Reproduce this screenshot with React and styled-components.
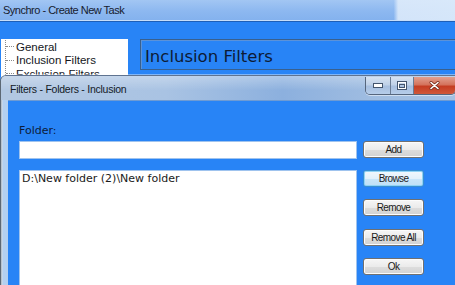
import React from "react";
import styled, { createGlobalStyle } from "styled-components";

const Global = createGlobalStyle`
  html, body { margin: 0; padding: 0; background: #2884f6; }
  #root { width: 455px; height: 285px; }
`;

const Desktop = styled.div`
  position: relative;
  width: 455px;
  height: 285px;
  overflow: hidden;
  background: #2884f6;
`;

const MainWindow = styled.div`
  display: flex;
  flex-direction: column;
  width: 100%;
  height: 100%;
`;

const MainTitleBar = styled.div`
  height: 20px;
  display: flex;
  align-items: center;
  padding-left: 3px;
  background:
    linear-gradient(90deg, rgba(255,255,255,0) 0%, rgba(255,255,255,0) 86.5%, rgba(225,237,251,0.85) 87.5%, rgba(222,236,251,0.9) 100%),
    linear-gradient(180deg, #a2c6f3 0%, #8db8f0 55%, #84b2ee 100%);
  border-bottom: 1px solid #c6def9;
  box-shadow: 0 1px 0 #1d5fb8;
  font-family: "Liberation Sans", Arial, sans-serif;
  font-size: 11px;
  letter-spacing: -0.5px;
  color: #17202e;
`;

const MainBody = styled.div`
  flex: 1;
  display: flex;
  align-items: flex-start;
  gap: 12px;
  padding-top: 18px;
  padding-left: 1px;
`;

const TreePanel = styled.div`
  width: 127px;
  height: 60px;
  background: #ffffff;
  padding-top: 1px;
  font-family: "Liberation Sans", Arial, sans-serif;
  font-size: 11.5px;
  color: #14161b;
`;

const TreeItems = styled.div`
  border-left: 1px dotted #8a8a8a;
  margin-left: 4px;
`;

const TreeItem = styled.div`
  display: flex;
  align-items: center;
  height: 13.5px;
  &::before {
    content: "";
    width: 8px;
    margin-right: 2px;
    border-top: 1px dotted #8a8a8a;
  }
`;

const HeaderPanel = styled.div`
  flex: 1;
  height: 31px;
  border: 1px solid #38608f;
  border-right: none;
  box-shadow: inset 1px 1px 0 #5b92d8;
  display: flex;
  align-items: center;
  padding: 3px 0 0 4px;
  box-sizing: border-box;
  font-family: "DejaVu Sans", Verdana, sans-serif;
  font-size: 16.5px;
  color: #0d1b35;
`;

const Dialog = styled.div`
  position: absolute;
  left: 0;
  top: 75px;
  width: 470px;
  height: 225px;
  display: flex;
  flex-direction: column;
  border-left: 1px solid #5d6874;
  border-top: 1px solid #5f7390;
  border-top-left-radius: 6px;
  background: linear-gradient(90deg, #9aa7b5 0px, #d3dce6 1px, #b4d0f0 2px, #b4d0f0 100%);
  box-shadow: 0 -1px 0 rgba(255,255,255,0.4);
`;

const DialogTitleBar = styled.div`
  height: 24px;
  display: flex;
  align-items: flex-start;
  background:
    linear-gradient(180deg, rgba(255,255,255,0.3) 0%, rgba(255,255,255,0) 60%),
    linear-gradient(90deg, #b3c8e2 0%, #a9c3e3 35%, #8cb0de 60%, #a0bde1 80%, #a5c1e3 100%);
  border-top-left-radius: 5px;
`;

const DialogTitle = styled.div`
  padding-left: 9px;
  padding-top: 7px;
  font-family: "Liberation Sans", Arial, sans-serif;
  font-size: 10.5px;
  letter-spacing: -0.25px;
  color: #131a26;
`;

const CaptionButtons = styled.div`
  margin-left: auto;
  margin-right: 15px;
  display: flex;
  height: 17px;
  margin-top: 1px;
  border: 1px solid #56667d;
  border-top: none;
  border-radius: 0 0 5px 5px;
  overflow: hidden;
  box-shadow: 0 1px 0 rgba(255,255,255,0.5);
`;

const CaptionButton = styled.div`
  width: ${p => p.$w}px;
  display: flex;
  align-items: center;
  justify-content: center;
  border-left: ${p => (p.$first ? "none" : "1px solid #6a7c95")};
  background: ${p =>
    p.$close
      ? "linear-gradient(180deg, #e2a08f 0%, #d4735c 45%, #c53d22 55%, #d0583a 100%)"
      : "linear-gradient(180deg, #d6e2f1 0%, #bfd1e8 45%, #a7bfdf 55%, #b6cdea 100%)"};
`;

const DialogBody = styled.div`
  flex: 1;
  margin-left: 7px;
  background: #2884f6;
  border-top: 1px solid #6e9bd3;
  padding: 23px 0 0 11px;
  display: flex;
  flex-direction: column;
`;

const Label = styled.div`
  height: 14px;
  margin-bottom: 3px;
  font-family: "DejaVu Sans", Verdana, sans-serif;
  font-size: 11px;
  color: #0d1b38;
`;

const Row = styled.div`
  display: flex;
  align-items: flex-start;
  gap: 6px;
`;

const TextBox = styled.div`
  box-sizing: border-box;
  width: 338px;
  height: ${p => p.$h}px;
  background: #ffffff;
  border: 1px solid #9fc3ee;
  padding: 1px 2px;
  font-family: "DejaVu Sans", Verdana, sans-serif;
  font-size: 11px;
  line-height: 14px;
  color: #1a1a1a;
`;

const ButtonColumn = styled.div`
  display: flex;
  flex-direction: column;
  gap: 12.4px;
`;

const Button = styled.div`
  box-sizing: border-box;
  width: 61px;
  height: 17px;
  display: flex;
  align-items: center;
  justify-content: center;
  border: 1px solid ${p => (p.$focus ? "#3a8fd0" : "#707070")};
  border-radius: 3px;
  background: ${p =>
    p.$focus
      ? "linear-gradient(180deg, #f2f8fd 0%, #e3f1fb 50%, #c9e6f9 51%, #bfe0f7 100%)"
      : "linear-gradient(180deg, #f6f6f6 0%, #ebebeb 50%, #dddddd 51%, #d2d2d2 100%)"};
  box-shadow: inset 0 0 0 1px ${p => (p.$focus ? "#8fd3f6" : "#fcfcfc")};
  font-family: "Liberation Sans", Arial, sans-serif;
  font-size: 10px;
  letter-spacing: -0.6px;
  color: #1a1a1a;
`;

const Gap = styled.div`
  height: ${p => p.$h}px;
`;

export default function App() {
  return (
    <>
      <Global />
      <Desktop>
        <MainWindow>
          <MainTitleBar>Synchro - Create New Task</MainTitleBar>
          <MainBody>
            <TreePanel>
              <TreeItems>
                <TreeItem>General</TreeItem>
                <TreeItem>Inclusion Filters</TreeItem>
                <TreeItem>Exclusion Filters</TreeItem>
              </TreeItems>
            </TreePanel>
            <HeaderPanel>Inclusion Filters</HeaderPanel>
          </MainBody>
        </MainWindow>

        <Dialog>
          <DialogTitleBar>
            <DialogTitle>Filters - Folders - Inclusion</DialogTitle>
            <CaptionButtons>
              <CaptionButton $w={24} $first>
                <svg width="10" height="5" viewBox="0 0 10 5">
                  <rect x="0.5" y="0.5" width="9" height="4" fill="#fff" stroke="#44556d" />
                </svg>
              </CaptionButton>
              <CaptionButton $w={22}>
                <svg width="10" height="9" viewBox="0 0 10 9">
                  <rect x="0.5" y="0.5" width="9" height="8" fill="none" stroke="#44556d" />
                  <rect x="1.5" y="1.5" width="7" height="6" fill="none" stroke="#fff" />
                  <rect x="2.5" y="3.5" width="5" height="3" fill="none" stroke="#44556d" />
                </svg>
              </CaptionButton>
              <CaptionButton $w={41} $close>
                <svg width="11" height="9" viewBox="0 0 11 9">
                  <path d="M2 1.5 L9 7.5 M9 1.5 L2 7.5" stroke="#7a3020" strokeWidth="3" strokeLinecap="round" />
                  <path d="M2 1.5 L9 7.5 M9 1.5 L2 7.5" stroke="#ffffff" strokeWidth="1.6" strokeLinecap="round" />
                </svg>
              </CaptionButton>
            </CaptionButtons>
          </DialogTitleBar>
          <DialogBody>
            <Label>Folder:</Label>
            <Row>
              <TextBox $h={18} />
              <Button>Add</Button>
            </Row>
            <Gap $h={11} />
            <Row>
              <TextBox $h={130}>D:\New folder (2)\New folder</TextBox>
              <ButtonColumn>
                <Button $focus>Browse</Button>
                <Button>Remove</Button>
                <Button>Remove All</Button>
                <Button>Ok</Button>
              </ButtonColumn>
            </Row>
          </DialogBody>
        </Dialog>
      </Desktop>
    </>
  );
}
